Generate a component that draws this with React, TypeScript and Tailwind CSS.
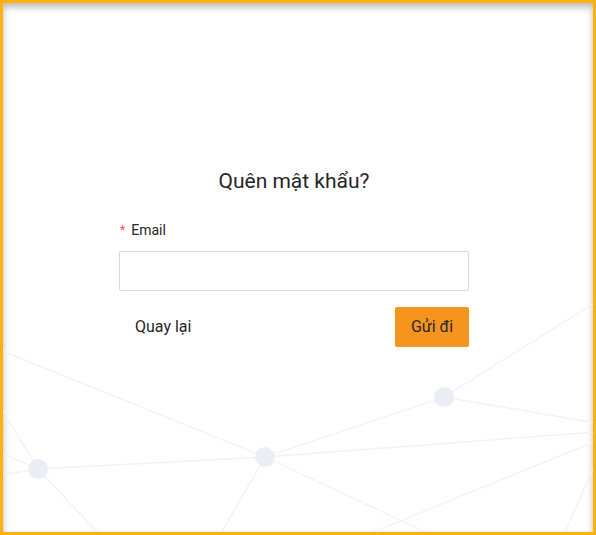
import React from "react";

function Network() {
  const stroke = "#f0f2f5";
  const lines: [number, number, number, number][] = [
    [0, 350, 265, 457],
    [0, 406, 38, 469],
    [0, 452, 38, 469],
    [0, 475, 38, 469],
    [38, 469, 265, 457],
    [38, 469, 100, 535],
    [265, 457, 444, 397],
    [265, 457, 596, 432],
    [265, 457, 432, 535],
    [265, 457, 220, 535],
    [444, 397, 596, 302],
    [444, 397, 596, 423],
    [366, 535, 596, 441],
    [564, 535, 596, 462],
  ];
  const nodes: [number, number][] = [
    [38, 469],
    [265, 457],
    [444, 397],
  ];
  return (
    <svg
      className="pointer-events-none absolute left-[-3px] top-[-3px]"
      width={596}
      height={535}
      viewBox="0 0 596 535"
    >
      {lines.map(([x1, y1, x2, y2], i) => (
        <line key={i} x1={x1} y1={y1} x2={x2} y2={y2} stroke={stroke} strokeWidth={1.3} />
      ))}
      {nodes.map(([cx, cy], i) => (
        <circle key={i} cx={cx} cy={cy} r={10} fill="#e9eef5" />
      ))}
    </svg>
  );
}

export default function App() {
  return (
    <div
      className="h-[535px] w-[596px] overflow-hidden border-[3px] border-[#fdb10f] bg-white"
      style={{ fontFamily: "Roboto, 'Noto Sans', sans-serif" }}
    >
      <div className="relative h-[600px] w-full overflow-hidden shadow-[inset_0_4px_7px_rgba(0,0,0,0.28)]">
        <Network />
        <div className="relative flex justify-center pr-[8px] pt-[164px]">
          <div className="flex w-[350px] flex-col">
            <h1 className="text-center text-[21px] leading-[28px] text-[#262626]">Quên mật khẩu?</h1>
            <div className="mt-[24px] flex items-center pb-[10px] text-[14px] leading-[22px] text-[#262626]">
              <span className="ml-[1px] mr-[6px] text-[12px] text-[#ff4d4f]">*</span>
              <span>Email</span>
            </div>
            <input
              className="h-[40px] w-full rounded-[2px] border border-[#d9d9d9] bg-white px-[11px] text-[14px] outline-none"
              type="text"
            />
            <div className="mt-[16px] flex items-center justify-between">
              <button className="h-[40px] px-[16px] text-[16px] text-[#262626]">Quay lại</button>
              <button className="h-[40px] w-[74px] rounded-[2px] bg-[#f7941d] text-[16px] text-[#262626]">
                Gửi đi
              </button>
            </div>
          </div>
        </div>
      </div>
    </div>
  );
}
